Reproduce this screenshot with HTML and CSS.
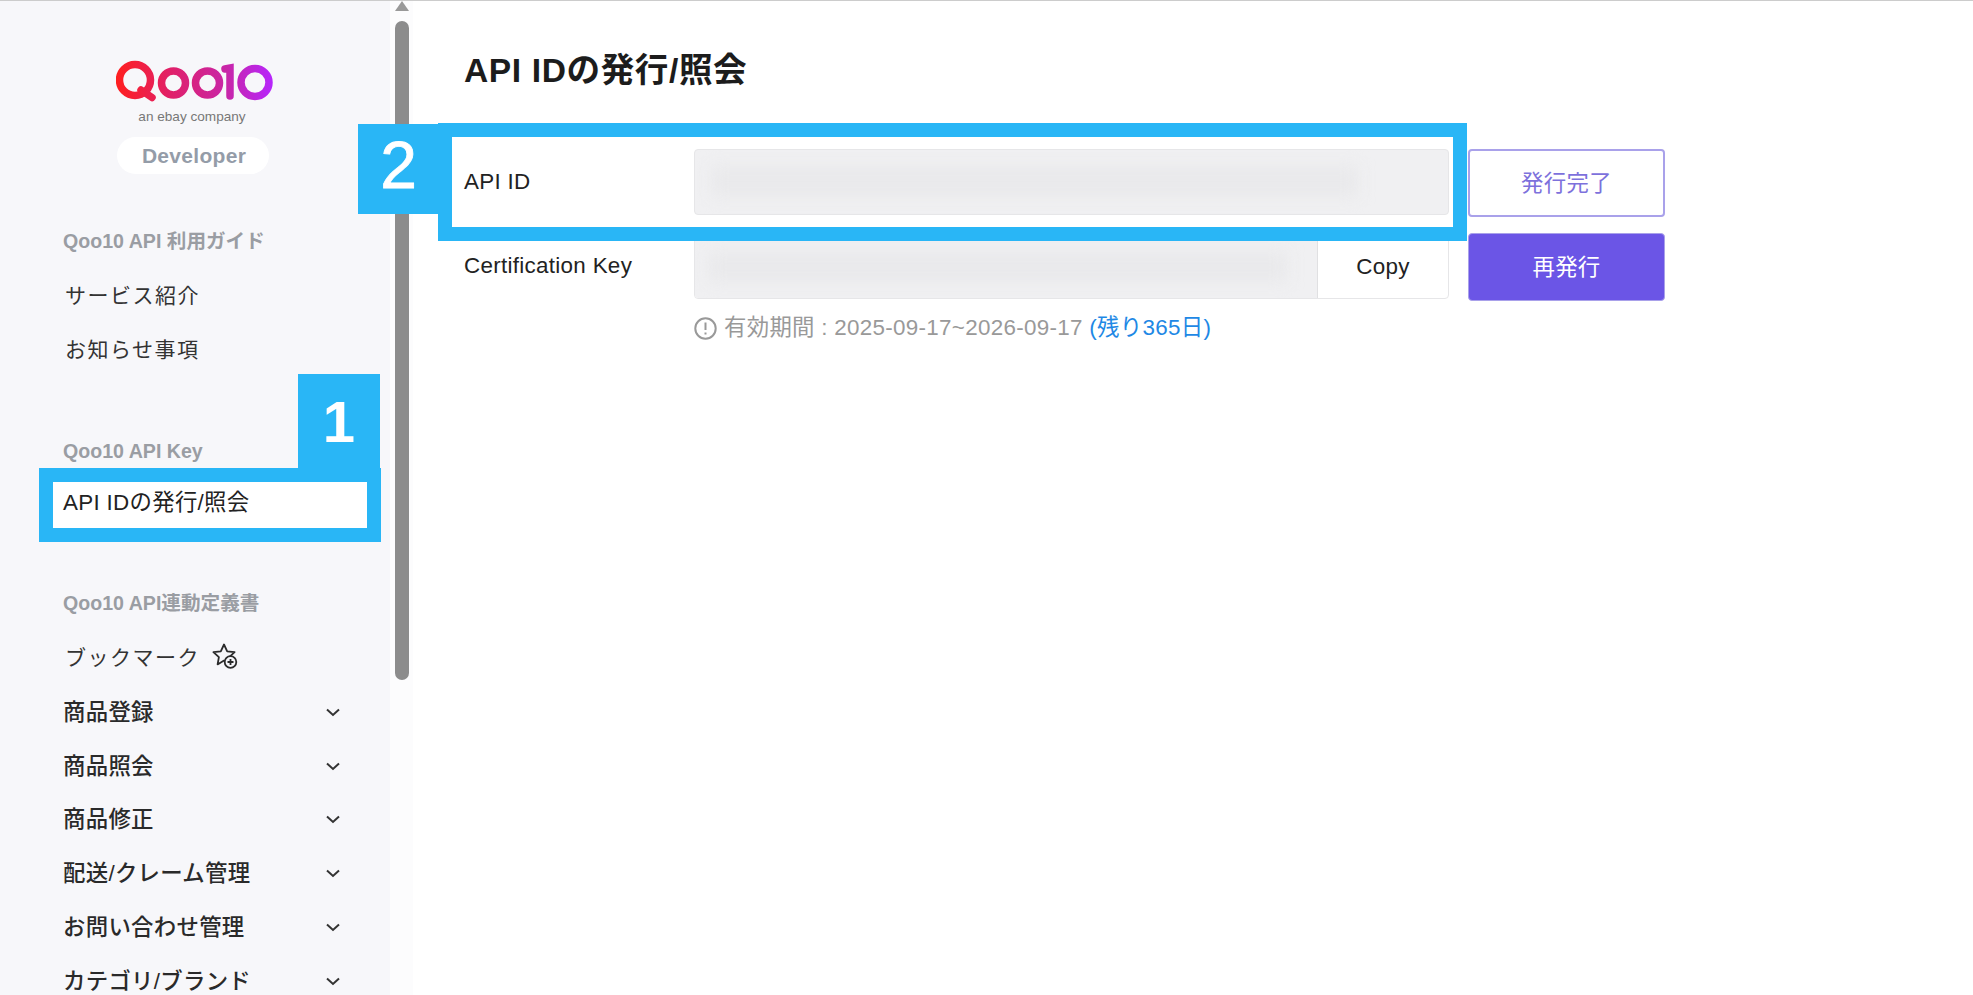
FILE: index.html
```html
<!DOCTYPE html>
<html lang="ja">
<head>
<meta charset="utf-8">
<title>API IDの発行/照会</title>
<link rel="stylesheet" href="styles.css">
</head>
<body>
<div class="page">
  <aside class="sidebar">
    <div class="brand">
      <svg class="logo" width="160" height="42" viewBox="115 60 160 42" fill="none" stroke-width="7.5" stroke-linecap="round">
        <defs>
          <linearGradient id="qg" gradientUnits="userSpaceOnUse" x1="115" y1="0" x2="273" y2="0">
            <stop offset="0" stop-color="#ff1f1f"/>
            <stop offset=".35" stop-color="#e0206a"/>
            <stop offset=".7" stop-color="#c826a8"/>
            <stop offset="1" stop-color="#b626ff"/>
          </linearGradient>
        </defs>
        <g stroke="url(#qg)">
          <circle cx="134" cy="80" r="15.5"/>
          <path d="M140 90 L151 97.5"/>
          <circle cx="172.5" cy="83" r="12"/>
          <circle cx="206.5" cy="83" r="12"/>
          <path d="M224 69 L229 68 V96"/>
          <circle cx="254" cy="82.5" r="14"/>
        </g>
      </svg>
      <div class="tagline">an ebay company</div>
      <div class="pill">Developer</div>
    </div>

    <h2 class="nav-label nav-label-first">Qoo10 API 利用ガイド</h2>
    <a class="nav-plain">サービス紹介</a>
    <a class="nav-plain">お知らせ事項</a>

    <h2 class="nav-label nav-label-key">Qoo10 API Key</h2>
    <a class="nav-active">
      <span class="mark-box mark-box-one"></span>
      <span class="mark-badge mark-badge-one">1</span>
      <span class="nav-active-text">API IDの発行/照会</span>
    </a>

    <h2 class="nav-label nav-label-def">Qoo10 API連動定義書</h2>
    <a class="nav-plain nav-bookmark">ブックマーク
      <svg class="star" width="28" height="28" viewBox="0 0 28 28" fill="none" stroke="#2b2b2b" stroke-width="1.8" stroke-linejoin="round">
        <path d="M13 2.5 L16.2 9.3 L23.6 10.2 L18.2 15.2 L19.4 22 L13 18.6 L6.6 22.4 L7.9 15.2 L2.4 10.2 L9.8 9.3 Z"/>
        <circle cx="19.5" cy="20" r="5.8" fill="#f7f7fa"/>
        <path d="M19.5 17 V23 M16.5 20 H22.5"/>
      </svg>
    </a>

    <a class="nav-group"><span>商品登録</span><svg class="chev" width="14" height="9" viewBox="0 0 14 9" fill="none" stroke="#333" stroke-width="2"><path d="M1 1.5 L7 7 L13 1.5"/></svg></a>
    <a class="nav-group"><span>商品照会</span><svg class="chev" width="14" height="9" viewBox="0 0 14 9" fill="none" stroke="#333" stroke-width="2"><path d="M1 1.5 L7 7 L13 1.5"/></svg></a>
    <a class="nav-group"><span>商品修正</span><svg class="chev" width="14" height="9" viewBox="0 0 14 9" fill="none" stroke="#333" stroke-width="2"><path d="M1 1.5 L7 7 L13 1.5"/></svg></a>
    <a class="nav-group"><span>配送/クレーム管理</span><svg class="chev" width="14" height="9" viewBox="0 0 14 9" fill="none" stroke="#333" stroke-width="2"><path d="M1 1.5 L7 7 L13 1.5"/></svg></a>
    <a class="nav-group"><span>お問い合わせ管理</span><svg class="chev" width="14" height="9" viewBox="0 0 14 9" fill="none" stroke="#333" stroke-width="2"><path d="M1 1.5 L7 7 L13 1.5"/></svg></a>
    <a class="nav-group"><span>カテゴリ/ブランド</span><svg class="chev" width="14" height="9" viewBox="0 0 14 9" fill="none" stroke="#333" stroke-width="2"><path d="M1 1.5 L7 7 L13 1.5"/></svg></a>
  </aside>

  <div class="scrollbar">
    <div class="scroll-arrow"></div>
    <div class="scroll-thumb"></div>
  </div>

  <main class="main">
    <h1 class="title">API IDの発行/照会</h1>
    <div class="form">
      <span class="mark-box mark-box-two"></span>
      <span class="mark-badge mark-badge-two">2</span>

      <label class="field-label">API ID</label>
      <div class="field field-id"><div class="smear smear-id"></div></div>
      <button class="btn btn-outline">発行完了</button>

      <label class="field-label">Certification Key</label>
      <div class="field field-key">
        <div class="key-value"><div class="smear smear-key"></div></div>
        <div class="copy">Copy</div>
      </div>
      <button class="btn btn-solid">再発行</button>

      <p class="notice">
        <svg class="notice-icon" width="23" height="23" viewBox="0 0 23 23" fill="none" stroke="#999" stroke-width="2"><circle cx="11.5" cy="11.5" r="10.2"/><path d="M11.5 5.5 V13"/><path d="M11.5 15.5 V17.5"/></svg>
        <span>有効期間 : 2025-09-17~2026-09-17 <em class="remain">(残り365日)</em></span>
      </p>
    </div>
  </main>
</div>
</body>
</html>
```
FILE: styles.css
```css
* { box-sizing: border-box; }
html, body { margin: 0; height: 100%; overflow: hidden; background: #fff; }
body {
  font-family: "Liberation Sans", "Noto Sans CJK JP", sans-serif;
  font-size: 22.4px;
  letter-spacing: 0.3px;
  color: #222;
}
.page {
  display: flex;
  height: 995px;
  border-top: 1px solid #ccc;
  overflow: hidden;
}

/* sidebar */
.sidebar {
  width: 390px;
  flex: none;
  background: #f7f7fa;
  padding: 59px 0 0 63px;
  height: 1100px;
}
.brand { width: 222px; margin-left: 19px; display: flex; flex-direction: column; align-items: center; }
.logo { display: block; margin-left: 5px; }
.tagline { font-size: 13.6px; line-height: 16px; letter-spacing: 0; color: #777; margin-top: 7px; margin-right: 2px; }
.pill {
  width: 152px;
  height: 37px;
  margin-top: 12px;
  border-radius: 19px;
  background: #fff;
  color: #949ca8;
  font-size: 21px;
  font-weight: 700;
  line-height: 37px;
  text-align: center;
  padding-left: 2px;
}
.nav-label {
  margin: 0;
  font-size: 19.6px;
  line-height: 26px;
  font-weight: 700;
  letter-spacing: 0;
  color: #9a9da3;
}
.nav-label-first { margin-top: 54px; }
.nav-label-key { margin-top: 63px; }
.nav-label-def { margin-top: 62px; }
.nav-plain {
  display: flex;
  align-items: center;
  height: 54px;
  padding-left: 2px;
  letter-spacing: 1.5px;
  font-size: 21px;
  color: #333;
}
.nav-label-first + .nav-plain { margin-top: 13px; }
.nav-label-def + .nav-plain { margin-top: 13px; }
.nav-bookmark { gap: 11px; height: 54px; }
.star { flex: none; }
.nav-active {
  display: block;
  position: relative;
  height: 46px;
  margin-top: 18px;
  width: 300px;
  z-index: 0;
}
.nav-active-text {
  position: relative;
  line-height: 42px;
  color: #222;
}
.nav-group {
  display: flex;
  align-items: center;
  justify-content: space-between;
  width: 277px;
  height: 53.8px;
  font-weight: 500;
  color: #2a2a2a;
}
.chev { flex: none; margin-top: 5px; }

/* annotations */
.mark-box {
  position: absolute;
  border: 14px solid #29b6f6;
}
.mark-box-one {
  left: -24px;
  top: -14px;
  width: 342px;
  height: 74px;
  background: #fff;
  z-index: -1;
}
.mark-box-two {
  left: -26px;
  top: -26px;
  width: 1029px;
  height: 118px;
  z-index: 2;
}
.mark-badge {
  position: absolute;
  background: #29b6f6;
  color: #fff;
  font-weight: 700;
  font-size: 58px;
  letter-spacing: 0;
  display: flex;
  align-items: center;
  justify-content: center;
}
.mark-badge-one {
  left: 235px;
  top: -108px;
  width: 82px;
  height: 95px;
}
.mark-badge-two {
  left: -106px;
  top: -25px;
  width: 81px;
  height: 90px;
  padding-bottom: 8px;
  z-index: 3;
  font-size: 66px;
  font-weight: 400;
  -webkit-text-stroke: 0.8px #fff;
}

/* scrollbar */
.scrollbar {
  width: 23px;
  flex: none;
  background: #fcfcfd;
  display: flex;
  flex-direction: column;
  align-items: center;
}
.scroll-arrow {
  width: 0;
  height: 0;
  border-left: 7px solid transparent;
  border-right: 7px solid transparent;
  border-bottom: 10px solid #999;
}
.scroll-thumb {
  width: 14px;
  height: 659px;
  margin-top: 10px;
  border-radius: 7px;
  background: #8c8c8c;
}

/* main */
.main { flex: 1; padding: 0 0 0 51px; position: relative; }
.title {
  margin: 50px 0 0;
  font-size: 33.6px;
  line-height: 40px;
  font-weight: 700;
  letter-spacing: 0.6px;
  color: #1c1c1c;
}
.form {
  position: relative;
  display: grid;
  grid-template-columns: 230px 755px 197px;
  grid-auto-rows: auto;
  row-gap: 16px;
  margin-top: 58px;
  width: 1201px;
}
.field-label {
  align-self: start;
  height: 66px;
  line-height: 66px;
  color: #222;
}
.field {
  height: 66px;
  border: 1px solid #e6e6e8;
  border-radius: 4px;
  background: #f0f0f2;
  overflow: hidden;
}
.field-id { padding: 16px 90px 17px 16px; }
.field-key { display: flex; background: #fff; }
.key-value { width: 623px; background: #f0f0f2; padding: 18px 30px 16px 14px; border-right: 1px solid #e0e0e2; overflow: hidden; }
.smear { height: 100%; background: #e9e9eb; filter: blur(8px); }
.copy { flex: 1; line-height: 66px; text-align: center; color: #222; }
.btn {
  height: 68px;
  width: 197px;
  margin-left: 19px;
  padding: 0 0 5px;
  border-radius: 4px;
  font: inherit;
  letter-spacing: inherit;
}
.btn-outline { background: #fff; border: 2px solid #a9a1ea; color: #7d71dc; }
.btn-solid { background: #6b55e6; border: 1px solid #a9a1ea; color: #fff; }
.notice {
  grid-column: 2 / 4;
  display: flex;
  align-items: center;
  gap: 7px;
  margin: -2px 0 0;
  line-height: 26px;
  color: #999;
}
.notice-icon { flex: none; }
.remain { font-style: normal; color: #1e88e5; }
```
